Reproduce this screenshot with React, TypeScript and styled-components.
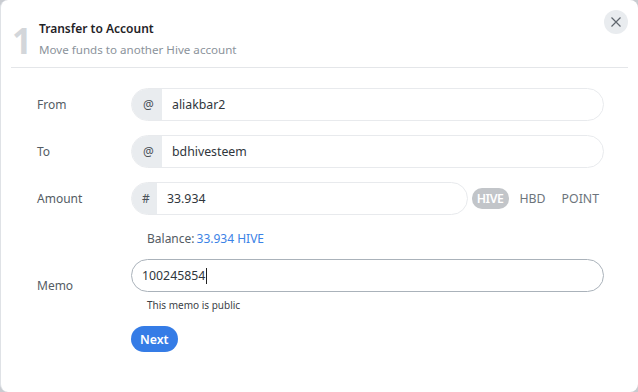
import styled, { createGlobalStyle } from "styled-components";

const GlobalStyle = createGlobalStyle`
  html, body {
    margin: 0;
    padding: 0;
    background: #c9ccd1;
  }
  body {
    font-family: "Noto Sans", "Open Sans", sans-serif;
  }
`;

const Modal = styled.div`
  width: 638px;
  height: 392px;
  box-sizing: border-box;
  background: #fff;
  border-radius: 8px;
  border-left: 1px solid #dfe2e6;
  position: relative;
  overflow: hidden;
`;

const Header = styled.div`
  display: flex;
  align-items: center;
  gap: 9px;
  margin: 0 10px;
  padding: 20px 0 8px 1px;
  border-bottom: 1px solid #e4e6e9;
`;

const StepNumber = styled.div`
  font-size: 35px;
  font-weight: 700;
  line-height: 1;
  color: #d3d6da;
  width: 18px;
  margin-top: 1px;
`;

const HeaderText = styled.div`
  display: flex;
  flex-direction: column;
  gap: 3px;
`;

const Title = styled.div`
  font-size: 12px;
  font-weight: 600;
  color: #1f2327;
  line-height: 18px;
`;

const Subtitle = styled.div`
  font-size: 11.6px;
  color: #8b939b;
  line-height: 18px;
`;

const CloseButton = styled.button`
  position: absolute;
  top: 10px;
  right: 10px;
  width: 24px;
  height: 24px;
  border-radius: 50%;
  border: none;
  background: #e9ecef;
  display: flex;
  align-items: center;
  justify-content: center;
  padding: 0;
`;

const Form = styled.div`
  display: grid;
  grid-template-columns: 94px 473px;
  padding: 20px 0 0 36px;
  row-gap: 14px;
  align-items: center;
`;

const Label = styled.div`
  font-size: 12px;
  color: #545c64;
`;

const InputGroup = styled.div`
  display: flex;
  align-items: center;
  gap: 4px;
`;

const Field = styled.div<{ $focused?: boolean }>`
  flex: 1 0 auto;
  display: flex;
  height: 33px;
  box-sizing: border-box;
  border-radius: 17px;
  border: 1px solid ${(p) => (p.$focused ? "#aab2ba" : "#e8eaed")};
  overflow: hidden;
`;

const Prefix = styled.div<{ $w: number }>`
  width: ${(p) => p.$w}px;
  box-sizing: border-box;
  background: #e9ecef;
  display: flex;
  align-items: center;
  justify-content: center;
  font-size: 12px;
  color: #4a5158;
  padding-left: 3px;
`;

const Value = styled.div<{ $pad?: number }>`
  flex: 1;
  display: flex;
  align-items: center;
  padding-left: ${(p) => p.$pad ?? 10}px;
  font-size: 12.3px;
  color: #30363c;
`;

const Caret = styled.span`
  display: inline-block;
  width: 1px;
  height: 16px;
  background: #222;
  margin-left: 1px;
`;

const Assets = styled.div`
  display: flex;
  align-items: center;
  gap: 6px;
`;

const Asset = styled.span<{ $active?: boolean }>`
  font-size: 12.3px;
  padding: 2px 5px;
  border-radius: 10px;
  background: ${(p) => (p.$active ? "#c2c5c9" : "transparent")};
  color: ${(p) => (p.$active ? "#fff" : "#6c747c")};
  font-weight: ${(p) => (p.$active ? 600 : 400)};
  letter-spacing: ${(p) => (p.$active ? "-0.4px" : "0")};
`;

const Note = styled.div<{ $small?: boolean }>`
  grid-column: 2;
  padding-left: 16px;
  font-size: ${(p) => (p.$small ? "10px" : "12px")};
  color: ${(p) => (p.$small ? "#3c4248" : "#545c64")};
  margin-top: ${(p) => (p.$small ? "0" : "1px")};
  margin-bottom: ${(p) => (p.$small ? "0" : "-2px")};
`;

const Blue = styled.span`
  color: #3b82e6;
  margin-left: 2px;
`;

const MemoBlock = styled.div`
  display: flex;
  flex-direction: column;
  gap: 6px;
`;

const NextButton = styled.button`
  grid-column: 2;
  justify-self: start;
  height: 26px;
  padding: 0 9px;
  border: none;
  border-radius: 13px;
  background: #357ce6;
  color: #fff;
  font-family: inherit;
  font-size: 12.3px;
  font-weight: 600;
  margin-top: 0;
`;

export default function App() {
  return (
    <>
      <GlobalStyle />
      <Modal>
        <Header>
          <StepNumber>1</StepNumber>
          <HeaderText>
            <Title>Transfer to Account</Title>
            <Subtitle>Move funds to another Hive account</Subtitle>
          </HeaderText>
        </Header>
        <CloseButton>
          <svg width="12" height="12" viewBox="0 0 12 12">
            <path d="M1.5 1.5 L10.5 10.5 M10.5 1.5 L1.5 10.5" stroke="#5f666d" strokeWidth="1.2" />
          </svg>
        </CloseButton>
        <Form>
          <Label>From</Label>
          <Field>
            <Prefix $w={30}>@</Prefix>
            <Value>aliakbar2</Value>
          </Field>

          <Label>To</Label>
          <Field>
            <Prefix $w={30}>@</Prefix>
            <Value>bdhivesteem</Value>
          </Field>

          <Label>Amount</Label>
          <InputGroup>
            <Field>
              <Prefix $w={25}>#</Prefix>
              <Value>33.934</Value>
            </Field>
            <Assets>
              <Asset $active>HIVE</Asset>
              <Asset>HBD</Asset>
              <Asset>POINT</Asset>
            </Assets>
          </InputGroup>

          <Note>
            Balance:<Blue>33.934 HIVE</Blue>
          </Note>

          <Label>Memo</Label>
          <MemoBlock>
            <Field $focused>
              <Value $pad={10}>
                100245854
                <Caret />
              </Value>
            </Field>
            <Note $small>This memo is public</Note>
          </MemoBlock>

          <NextButton>Next</NextButton>
        </Form>
      </Modal>
    </>
  );
}
